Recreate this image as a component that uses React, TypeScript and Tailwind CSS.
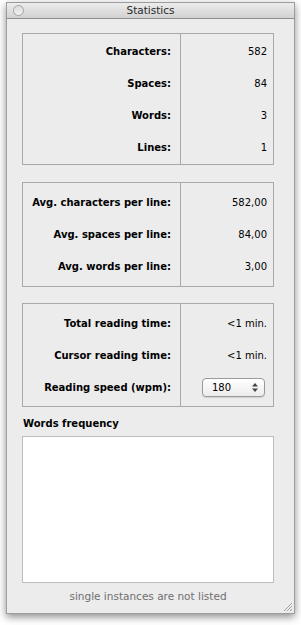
import React from "react";

interface Row {
  label: string;
  value: React.ReactNode;
}

const font = { fontFamily: '"DejaVu Sans", "Liberation Sans", sans-serif' };

const StatBox = ({ rows, height }: { rows: Row[]; height: string }) => {
  return (
    <div className={`flex border border-[#a9a9a9] ${height}`}>
      <div className="flex w-[158px] flex-col justify-center border-r border-[#a9a9a9] pr-[9px]">
        {rows.map((r) => (
          <div
            key={r.label}
            className="flex h-[32px] items-center justify-end text-[10px] font-bold text-black"
          >
            {r.label}
          </div>
        ))}
      </div>
      <div className="flex flex-1 flex-col justify-center pr-[6px]">
        {rows.map((r) => (
          <div
            key={r.label}
            className="flex h-[32px] items-center justify-end text-[10px] text-black"
          >
            {r.value}
          </div>
        ))}
      </div>
    </div>
  );
};

const SpeedSelect = () => (
  <div className="mr-[2px] flex h-[19px] w-[63px] items-center justify-between rounded-[4px] border border-[#9a9a9a] bg-gradient-to-b from-white to-[#ececec] pl-[9px] pr-[6px] shadow-[0_1px_1px_rgba(0,0,0,0.12)]">
    <span className="text-[10px] text-black">180</span>
    <svg width="6" height="9" viewBox="0 0 6 9">
      <path d="M3 0 L6 3.5 L0 3.5 Z" fill="#444" />
      <path d="M3 9 L6 5.5 L0 5.5 Z" fill="#444" />
    </svg>
  </div>
);

const App = () => {
  const basic: Row[] = [
    { label: "Characters:", value: "582" },
    { label: "Spaces:", value: "84" },
    { label: "Words:", value: "3" },
    { label: "Lines:", value: "1" },
  ];
  const averages: Row[] = [
    { label: "Avg. characters per line:", value: "582,00" },
    { label: "Avg. spaces per line:", value: "84,00" },
    { label: "Avg. words per line:", value: "3,00" },
  ];
  const reading: Row[] = [
    { label: "Total reading time:", value: "<1 min." },
    { label: "Cursor reading time:", value: "<1 min." },
    { label: "Reading speed (wpm):", value: <SpeedSelect /> },
  ];

  return (
    <div className="h-[625px] w-[301px] overflow-hidden bg-white pt-[2px]" style={font}>
      <div className="relative ml-[6px] flex h-[612px] w-[289px] flex-col border border-[#9d9d9d] bg-[#ececec] shadow-[0_3px_8px_rgba(0,0,0,0.45)]">
        {/* title bar */}
        <div className="relative flex h-[16px] items-center justify-center border-b border-[#8f8f8f] bg-gradient-to-b from-[#ececec] to-[#d2d2d2]">
          <div className="absolute left-[6px] top-[2px] h-[11px] w-[11px] rounded-full border border-[#a4a4a4] bg-gradient-to-b from-[#dcdcdc] to-[#f2f2f2]" />
          <span className="text-[10.5px] text-[#2a2a2a]">Statistics</span>
        </div>

        <div className="flex flex-1 flex-col pl-[15px] pr-[20px] pt-[14px]">
          <StatBox rows={basic} height="h-[132px]" />
          <div className="h-[17px]" />
          <StatBox rows={averages} height="h-[105px]" />
          <div className="h-[16px]" />
          <StatBox rows={reading} height="h-[104px]" />

          <div className="mt-[9px] pl-[1px] text-[10px] font-bold text-black">
            Words frequency
          </div>
          <div className="mt-[5px] h-[147px] border border-[#bdbdbd] bg-white" />
          <div className="mt-[6px] text-center text-[10.5px] text-[#6f6f6f]">
            single instances are not listed
          </div>
        </div>

        {/* resize grip */}
        <svg className="absolute bottom-[1px] right-[1px]" width="10" height="10" viewBox="0 0 10 10">
          <path d="M1 9 L9 1 M4 9 L9 4 M7 9 L9 7" stroke="#a0a0a0" strokeWidth="1" />
        </svg>
      </div>
    </div>
  );
};

export default App;
